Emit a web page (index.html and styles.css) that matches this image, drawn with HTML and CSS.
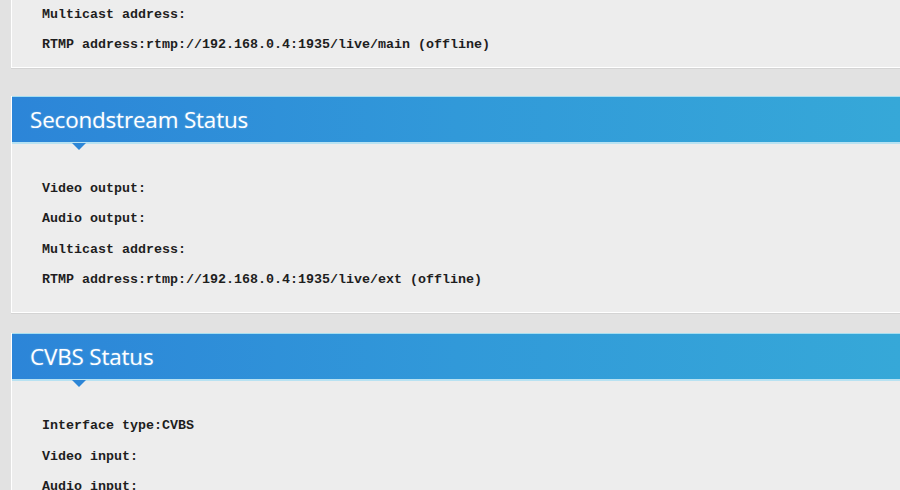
FILE: index.html
```html
<!DOCTYPE html>
<html>
<head>
<meta charset="utf-8">
<title>Status</title>
<link rel="stylesheet" href="styles.css">
</head>
<body>
<div class="page">
  <section class="card card-first">
    <div class="card-body body-first">
      <p class="row">Multicast address:</p>
      <p class="row">RTMP address:rtmp://192.168.0.4:1935/live/main (offline)</p>
    </div>
  </section>

  <section class="card card-second">
    <h2 class="card-head">Secondstream Status</h2>
    <div class="card-body">
      <p class="row">Video output:</p>
      <p class="row">Audio output:</p>
      <p class="row">Multicast address:</p>
      <p class="row">RTMP address:rtmp://192.168.0.4:1935/live/ext (offline)</p>
    </div>
  </section>

  <section class="card card-third">
    <h2 class="card-head">CVBS Status</h2>
    <div class="card-body">
      <p class="row">Interface type:CVBS</p>
      <p class="row">Video input:</p>
      <p class="row">Audio input:</p>
    </div>
  </section>
</div>
</body>
</html>
```

FILE: styles.css
```css
html, body {
  margin: 0;
  padding: 0;
  background: #e2e2e2;
  overflow: hidden;
}

.page {
  display: flex;
  flex-direction: column;
  padding-left: 11px;
}

.card {
  background: #ededed;
  border-left: 1px solid #ffffff;
  border-bottom: 1px solid #ffffff;
  box-shadow: 0 1px 0 #d4d4d4;
}

.card-second {
  margin-top: 28px;
}

.card-third {
  margin-top: 20px;
}

.card-head {
  position: relative;
  margin: 0;
  height: 45px;
  box-sizing: content-box;
  padding-left: 18px;
  border-top: 1px solid #a6def0;
  border-bottom: 2px solid #b8e2f2;
  background: linear-gradient(to right, #2c85d8 0%, #3199d9 50%, #36a8d8 100%);
  color: #ffffff;
  font-family: "Open Sans", "Noto Sans", sans-serif;
  font-weight: 400;
  font-size: 22.4px;
  line-height: 45px;
  text-shadow: 0 0 2px rgba(255, 255, 255, 0.35);
  letter-spacing: -0.15px;
}

.card-head::after {
  content: "";
  position: absolute;
  left: 60px;
  bottom: -8px;
  width: 0;
  height: 0;
  border-left: 7px solid transparent;
  border-right: 7px solid transparent;
  border-top: 7px solid #2c86d7;
}

.card-body {
  padding: 30px 0 17px 30px;
}

.body-first {
  padding-top: 0;
  padding-bottom: 6px;
}

.row {
  margin: 0;
  height: 30.4px;
  line-height: 30.4px;
  font-family: "Liberation Mono", "DejaVu Sans Mono", monospace;
  font-weight: 700;
  font-size: 13.33px;
  color: #1e1e1e;
  white-space: nowrap;
}
```
